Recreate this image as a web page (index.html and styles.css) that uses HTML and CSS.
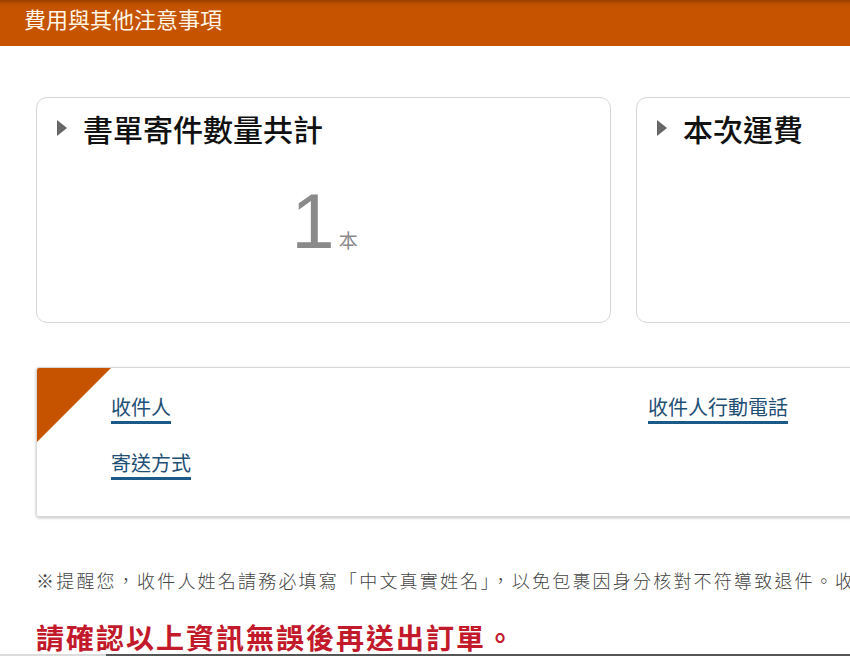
FILE: index.html
```html
<!DOCTYPE html>
<html lang="zh-Hant">
<head>
<meta charset="utf-8">
<title>費用與其他注意事項</title>
<link rel="stylesheet" href="styles.css">
</head>
<body>
<div class="header">費用與其他注意事項</div>
<div class="main">
  <div class="cards">
    <div class="card">
      <div class="card-title"><span class="tri"></span>書單寄件數量共計</div>
      <div class="qty"><span class="num">1</span><span class="unit">本</span></div>
    </div>
    <div class="card">
      <div class="card-title"><span class="tri"></span>本次運費</div>
    </div>
  </div>
  <div class="panel">
    <div class="fields">
      <div class="field"><span class="label">收件人</span></div>
      <div class="field"><span class="label">收件人行動電話</span></div>
      <div class="field"><span class="label">寄送方式</span></div>
    </div>
  </div>
  <p class="note">※提醒您，收件人姓名請務必填寫「中文真實姓名」，以免包裹因身分核對不符導致退件。收件人姓名請勿填寫英文或暱稱。</p>
  <p class="confirm">請確認以上資訊無誤後再送出訂單。</p>
</div>
<div class="scrollbar"><div class="thumb"></div></div>
</body>
</html>
```
FILE: styles.css
```css
html, body {
  margin: 0;
  padding: 0;
  overflow: hidden;
  background: #fff;
}
body {
  font-family: "Noto Sans CJK TC", "Noto Sans", sans-serif;
  color: #111;
  width: 850px;
  height: 656px;
}
.header {
  height: 46px;
  box-sizing: border-box;
  padding: 7px 0 0 24px;
  font-size: 22px;
  line-height: 22px;
  color: #fff6e6;
  background: linear-gradient(to bottom, #983d00 0, #bd4f00 4px, #c65300 8px, #c65300 100%);
}
.main {
  padding: 51px 0 0 36px;
  width: 1175px;
}
.cards {
  display: flex;
  gap: 25px;
}
.card {
  width: 575px;
  height: 226px;
  box-sizing: border-box;
  border: 1px solid #d6d6d6;
  border-radius: 11px;
  padding: 15px 20px 0 20px;
}
.card-title {
  display: flex;
  align-items: center;
  font-size: 30px;
  line-height: 30px;
  font-weight: 500;
  color: #111;
}
.tri {
  width: 0;
  height: 0;
  border-top: 8px solid transparent;
  border-bottom: 8px solid transparent;
  border-left: 10px solid #666;
  margin-right: 16px;
}
.qty {
  display: flex;
  justify-content: center;
  align-items: baseline;
  gap: 4px;
  margin-top: 39px;
  color: #8a8a8a;
  padding-left: 2px;
}
.num {
  font-family: "Liberation Sans", Arial, sans-serif;
  font-size: 78px;
  line-height: 78px;
}
.unit {
  font-size: 19px;
  line-height: 19px;
}
.panel {
  position: relative;
  margin-top: 44px;
  height: 150px;
  box-sizing: border-box;
  border: 1px solid #d8d8d8;
  border-radius: 3px;
  box-shadow: 0 1px 3px rgba(0,0,0,0.25);
  padding: 28px 0 0 74px;
  overflow: hidden;
}
.panel::before {
  content: "";
  position: absolute;
  left: 0;
  top: 0;
  width: 0;
  height: 0;
  border-top: 74px solid #c65300;
  border-right: 74px solid transparent;
}
.fields {
  display: grid;
  grid-template-columns: 537px 537px;
  row-gap: 28px;
}
.label {
  display: inline-block;
  font-size: 20px;
  line-height: 20px;
  color: #1f4f75;
  padding-bottom: 4px;
  border-bottom: 3px solid #1b5a88;
}
.note {
  margin: 54px 0 0 0;
  font-size: 18px;
  line-height: 18px;
  letter-spacing: 2.2px;
  color: #444;
  white-space: nowrap;
  font-weight: 300;
}
.confirm {
  margin: 34px 0 0 0;
  font-size: 28px;
  line-height: 28px;
  letter-spacing: 2px;
  font-weight: 700;
  color: #c2192b;
  white-space: nowrap;
}
.scrollbar {
  position: fixed;
  left: 0;
  bottom: 0;
  width: 850px;
  height: 2px;
  background: #dcdcdc;
}
.thumb {
  margin-left: 106px;
  height: 2px;
  background: #555;
}
```
